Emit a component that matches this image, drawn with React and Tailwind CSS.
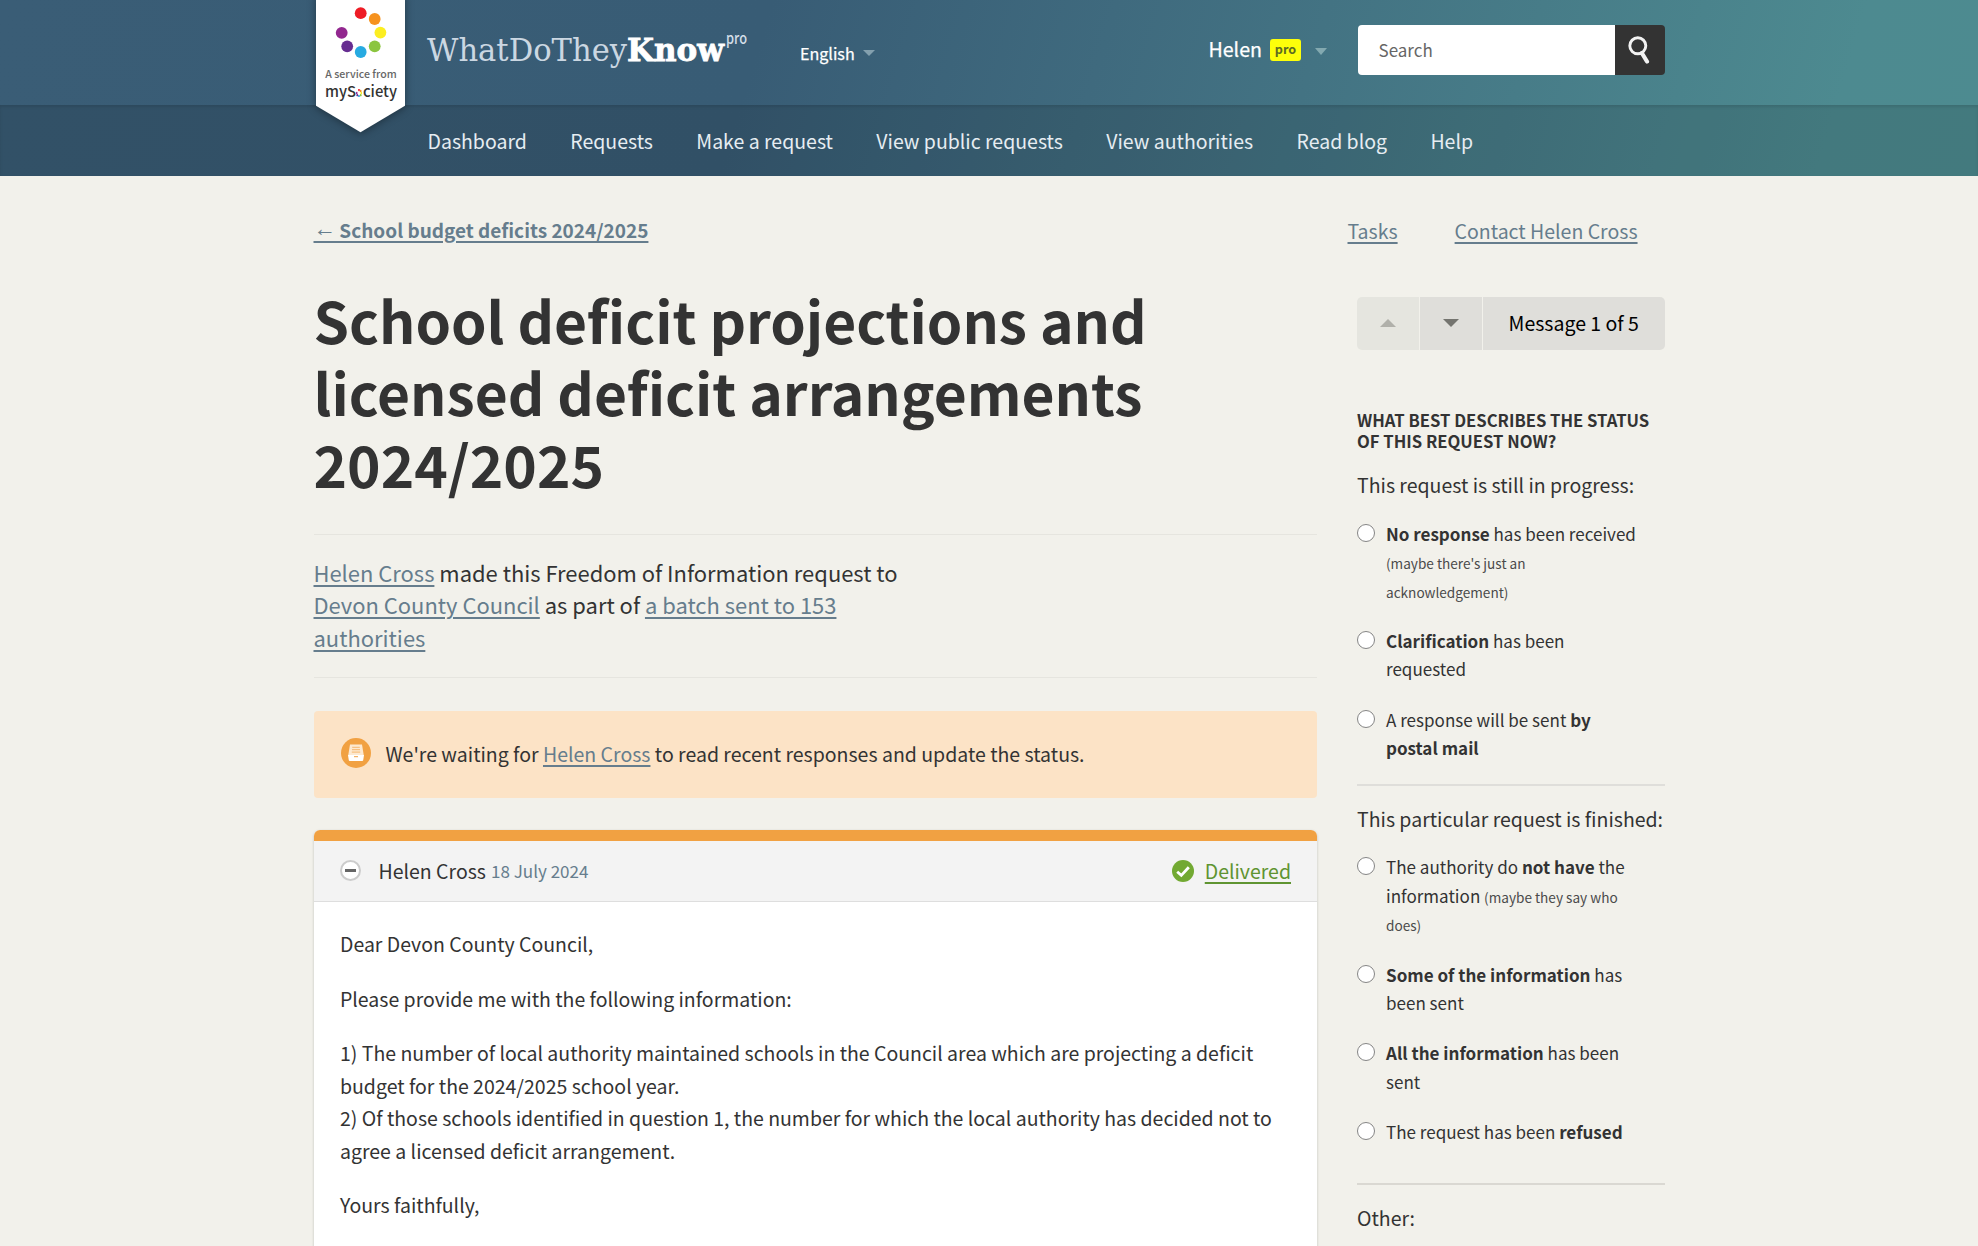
import React from "react";

const NAV = ["Dashboard", "Requests", "Make a request", "View public requests", "View authorities", "Read blog", "Help"];

const RING = [
  [44.7, 13.2, "#ee1c25"],
  [58.7, 19, "#f6921e"],
  [64.4, 32.6, "#fcee21"],
  [58.7, 46.3, "#8bc53f"],
  [44.7, 52, "#27aae1"],
  [31.2, 46.3, "#662d91"],
  [25.7, 32.8, "#92278f"],
];

function A({ children, className = "" }) {
  return (
    <a href="#" className={`text-[#667d8d] underline decoration-[1.6px] underline-offset-[2.5px] ${className}`}>
      {children}
    </a>
  );
}

function Caret({ className = "", up = false }) {
  return (
    <svg className={className} viewBox="0 0 12 6" preserveAspectRatio="none" fill="currentColor">
      <path d={up ? "M0 6 L6 0 L12 6 Z" : "M0 0 L12 0 L6 6 Z"} />
    </svg>
  );
}

function Ribbon() {
  return (
    <div className="absolute left-[3px] top-0 z-10 h-[140px] w-[90px]">
      <svg className="h-full w-full overflow-visible drop-shadow-[0_1px_4px_rgba(0,0,0,0.4)]" viewBox="0 0 90 140">
        <path d="M0 -5 H89 V105.7 L44.5 132.3 L0 105.7 Z" fill="#fff" />
        {RING.map(([x, y, c]) => (
          <circle key={c} cx={x} cy={y} r="5.9" fill={c} />
        ))}
      </svg>
      <div className="absolute inset-x-0 top-[64px] text-center text-[10.6px] font-medium leading-[20px] text-[#666]">
        A service from
      </div>
      <div className="absolute inset-x-0 top-[81px] flex items-center justify-center text-[14.8px] font-medium leading-[20px] text-[#333]">
        <span>myS</span>
        <svg className="mx-[0.5px] mt-[3px] h-[8px] w-[6px]" viewBox="20 7 50 51" preserveAspectRatio="none">
          {RING.map(([x, y, c]) => (
            <circle key={c} cx={x} cy={y} r="7.5" fill={c} />
          ))}
        </svg>
        <span>ciety</span>
      </div>
    </div>
  );
}

function Wordmark() {
  return (
    <svg className="absolute left-[113px] top-[20px] h-[60px] w-[330px]" viewBox="0 0 330 60">
      <text x="1" y="40.7" fontSize="31" fontFamily="'DejaVu Serif'" fill="#cbd7e2" textLength="200" lengthAdjust="spacingAndGlyphs">
        WhatDoThey
      </text>
      <text x="201" y="40.7" fontSize="31" fontWeight="700" fontFamily="'DejaVu Serif'" fill="#fff" stroke="#fff" strokeWidth="0.8" textLength="97" lengthAdjust="spacingAndGlyphs">
        Know
      </text>
      <text x="300" y="24.3" fontSize="16" fontWeight="500" fill="#d3dee8" textLength="21" lengthAdjust="spacingAndGlyphs">
        pro
      </text>
    </svg>
  );
}

function Header() {
  return (
    <header className="h-[175.5px] bg-[linear-gradient(107deg,#3a5d76_0%,#385c75_38%,#3f6a7e_55%,#477c88_76%,#4d8a90_92%,#4d8b90_100%)] text-white">
      <div className="relative mx-auto h-[105px] w-[1352px]">
        <Ribbon />
        <Wordmark />
        <div className="flex h-full items-start">
          <div className="ml-[487px] mt-[38px] flex items-center text-[16.1px] leading-[30px] [-webkit-text-stroke:0.25px_white]">
            <span>English</span>
            <Caret className="ml-[8.5px] h-[6px] w-[12px] text-[#83a0ae]" />
          </div>
          <div className="ml-auto mt-[35px] flex items-center text-[19.6px] leading-[30px]">
            <span className="-mt-px [-webkit-text-stroke:0.25px_white]">Helen</span>
            <span className="ml-[8px] flex h-[22px] w-[31px] items-center justify-center rounded-[3px] bg-[#fdff0a] pb-[2px] text-[12.6px] font-bold text-[#5c6b22]">
              pro
            </span>
            <Caret className="ml-[14px] mt-[4px] h-[7px] w-[12px] text-[#83a9b0]" />
          </div>
          <div className="ml-[31px] mt-[25px] flex h-[50px] w-[307px] overflow-hidden rounded-[4px]">
            <div className="flex-1 bg-white pl-[20.5px] text-[17px] leading-[50px] text-[#666]">Search</div>
            <div className="flex w-[50.5px] items-center justify-center bg-[#333]">
              <svg className="-ml-px h-[28px] w-[24px]" viewBox="0 0 24 28" fill="none" stroke="#f2f2f2">
                <circle cx="10.8" cy="9.8" r="8" strokeWidth="2.9" />
                <path d="M14.8 17 L20 25.5" strokeWidth="4.2" strokeLinecap="round" />
              </svg>
            </div>
          </div>
        </div>
      </div>
      <div className="h-[70.5px] bg-black/[0.12] shadow-[inset_0_2px_3px_rgba(0,0,0,0.1)]">
        <nav className="mx-auto flex h-full w-[1352px] items-center gap-[43.4px] pl-[114.5px] text-[19.5px] text-[#e6edf2]">
          {NAV.map((n) => (
            <a key={n} href="#" className="whitespace-nowrap">{n}</a>
          ))}
        </nav>
      </div>
    </header>
  );
}

function AlertIcon() {
  return (
    <svg className="h-[30px] w-[30px]" viewBox="0 0 30 30">
      <circle cx="15" cy="15" r="15" fill="#f1a142" />
      <path d="M9 6.5 h12 l1.8 11 h-15.6 z" fill="#fde9d0" />
      <path d="M11.2 9.3 h7.6 M11 11.7 h8 M10.8 14.1 h8.4" stroke="#f3b062" strokeWidth="0.9" />
      <path d="M7 17 h16 l-0.8 5.2 q-0.2 0.8 -1 0.8 h-12.4 q-0.8 0 -1 -0.8 z" fill="#fff" />
      <path d="M13 18.7 h4" stroke="#f1a142" strokeWidth="1" />
    </svg>
  );
}

function Message() {
  return (
    <article className="mt-[32.5px] overflow-hidden rounded-t-[6px] bg-white shadow-[0_1px_3px_rgba(0,0,0,0.2)]">
      <div className="h-[11px] bg-[#f1a142]" />
      <div className="flex h-[60.5px] items-center border-b border-[#dedede] bg-[#f3f3f3] pb-px pl-[26px] pr-[26px]">
        <span className="flex h-[21px] w-[21px] items-center justify-center rounded-full border-2 border-[#ccc] bg-white">
          <span className="h-[2.5px] w-[11px] bg-[#666]" />
        </span>
        <span className="ml-[18px] text-[19.5px]">Helen Cross</span>
        <span className="ml-[5px] text-[17.05px] text-[#667d8d]">18 July 2024</span>
        <svg className="ml-auto h-[22px] w-[22px]" viewBox="0 0 22 22">
          <circle cx="11" cy="11" r="11" fill="#72a932" />
          <path d="M5.2 11.8 L9.3 15.4 L16.8 7.2" fill="none" stroke="#fff" strokeWidth="2.8" />
        </svg>
        <a href="#" className="ml-[11px] text-[19.5px] text-[#5f9431] underline decoration-[1.6px] underline-offset-[2.5px]">Delivered</a>
      </div>
      <div className="h-[360px] space-y-[21.6px] px-[26.5px] pt-[26.4px] text-[19.49px] leading-[32.75px]">
        <p>Dear Devon County Council,</p>
        <p>Please provide me with the following information:</p>
        <p className="whitespace-nowrap">
          1) The number of local authority maintained schools in the Council area which are projecting a deficit
          <br />
          budget for the 2024/2025 school year.
          <br />
          2) Of those schools identified in question 1, the number for which the local authority has decided not to
          <br />
          agree a licensed deficit arrangement.
        </p>
        <p>Yours faithfully,</p>
      </div>
    </article>
  );
}

function Option({ children }) {
  return (
    <label className="flex">
      <span className="mt-[4px] h-[18px] w-[18px] shrink-0 rounded-full border-[1.5px] border-[#858585] bg-white" />
      <span className="ml-[11px] whitespace-nowrap text-[17.05px] leading-[28.5px]">{children}</span>
    </label>
  );
}

function Small({ children }) {
  return <span className="text-[13.6px] leading-none text-[#4a4a4a]">{children}</span>;
}

function Sidebar() {
  return (
    <aside className="w-[307.5px] shrink-0">
      <div className="mt-[57px] flex h-[53px] gap-[1.5px] overflow-hidden rounded-[5px]">
        <div className="flex w-[61.5px] items-center justify-center bg-[#e5e5df]">
          <Caret up className="h-[8px] w-[16px] text-[#b0b0aa]" />
        </div>
        <div className="flex w-[61.5px] items-center justify-center bg-[#dfdeda]">
          <Caret className="h-[8px] w-[16px] text-[#74746f]" />
        </div>
        <div className="flex flex-1 items-center justify-center bg-[#dfdeda] text-[19.5px] text-black">Message 1 of 5</div>
      </div>
      <h2 className="mt-[60.2px] whitespace-nowrap text-[16.65px] font-bold leading-[21.3px]">
        WHAT BEST DESCRIBES THE STATUS
        <br />
        OF THIS REQUEST NOW?
      </h2>
      <p className="mt-[16.4px] text-[19.5px] leading-[32.8px]">This request is still in progress:</p>
      <div className="mt-[18.2px] flex flex-col gap-[21.8px]">
        <Option>
          <b>No response</b> has been received
          <br />
          <Small>(maybe there's just an</Small>
          <br />
          <Small>acknowledgement)</Small>
        </Option>
        <Option>
          <b>Clarification</b> has been
          <br />
          requested
        </Option>
        <Option>
          A response will be sent <b>by</b>
          <br />
          <b>postal mail</b>
        </Option>
      </div>
      <hr className="mt-[21.5px] border-t-2 border-[#dfdeda]" />
      <p className="mt-[17px] whitespace-nowrap text-[19.5px] leading-[32.8px]">This particular request is finished:</p>
      <div className="mt-[17.2px] flex flex-col gap-[21.8px]">
        <Option>
          The authority do <b>not have</b> the
          <br />
          information <Small>(maybe they say who</Small>
          <br />
          <Small>does)</Small>
        </Option>
        <Option>
          <b>Some of the information</b> has
          <br />
          been sent
        </Option>
        <Option>
          <b>All the information</b> has been
          <br />
          sent
        </Option>
        <Option>
          The request has been <b>refused</b>
        </Option>
      </div>
      <hr className="mt-[36px] border-t-2 border-[#dad8d2]" />
      <p className="mt-[17px] text-[19.5px] leading-[32.8px]">Other:</p>
    </aside>
  );
}

export default function App() {
  return (
    <div className="h-[1246px] overflow-hidden bg-[#f2f1eb] font-['Noto_Sans_CJK_SC','Noto_Sans',sans-serif] text-[#333]">
      <Header />
      <div className="mx-auto flex w-[1351px] justify-between">
        <main className="w-[1003.5px]">
          <div className="mt-[38.5px] h-[32px] text-[19px] font-bold leading-[32px]">
            <A>
              <span className="-mr-px align-[2px] font-['Liberation_Sans'] text-[22.5px] font-normal leading-none">←</span> School budget deficits 2024/2025
            </A>
          </div>
          <h1 className="mt-[38px] whitespace-nowrap text-[56.9px] font-bold leading-[71.8px]">
            School deficit projections and
            <br />
            licensed deficit arrangements
            <br />
            2024/2025
          </h1>
          <div className="mt-[35px] border-y border-[#e6e5df] pb-[21.8px] pt-[21.2px] text-[21.95px] leading-[32.8px]">
            <A>Helen Cross</A> made this Freedom of Information request to
            <br />
            <A>Devon County Council</A> as part of <A>a batch sent to 153</A>
            <br />
            <A>authorities</A>
          </div>
          <div className="mt-[33px] flex h-[87px] items-center rounded-[4px] bg-[#fce3c6] pb-[2px] pl-[27px] text-[19.5px]">
            <AlertIcon />
            <span className="ml-[15px]">
              We're waiting for <A>Helen Cross</A> to read recent responses and update the status.
            </span>
          </div>
          <Message />
        </main>
        <div className="flex w-[307.5px] flex-col">
          <div className="-ml-[9.5px] mt-[39.5px] flex gap-[57px] whitespace-nowrap text-[19.5px] leading-[32px]">
            <A>Tasks</A>
            <A>Contact Helen Cross</A>
          </div>
          <div className="-mt-[7.5px]">
            <Sidebar />
          </div>
        </div>
      </div>
    </div>
  );
}
